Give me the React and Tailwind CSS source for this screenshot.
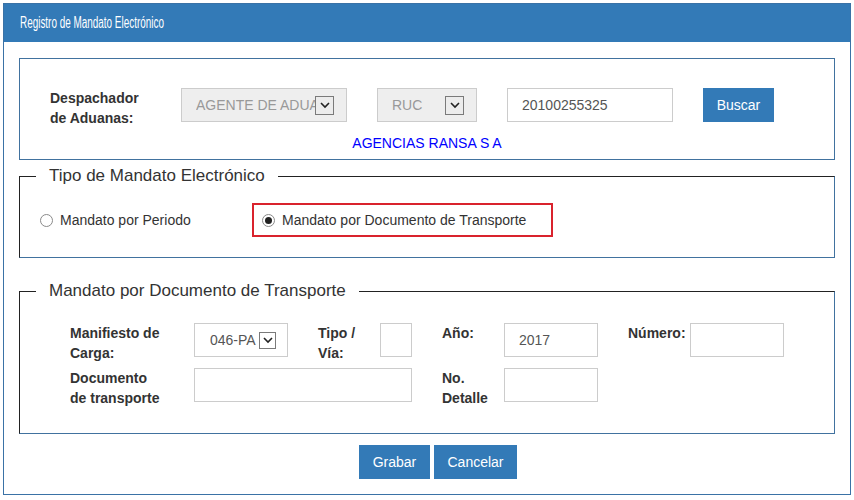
import React from "react";

function Arrow({ small }) {
  const size = small ? "h-[17px] w-[17px] bg-white" : "h-[19px] w-[19px] bg-[#ececec]";
  return (
    <span className={"flex shrink-0 items-center justify-center border border-[#7a7a7a] " + size}>
      <svg width="12" height="12" viewBox="0 0 12 12">
        <path d="M2 4l4 4 4-4" fill="none" stroke="#222" strokeWidth="1.6" />
      </svg>
    </span>
  );
}

function Radio({ checked }) {
  return (
    <span className="flex h-[13px] w-[13px] shrink-0 items-center justify-center rounded-full border border-[#8a8a8a] bg-white">
      {checked && <span className="h-[7px] w-[7px] rounded-full bg-[#222]" />}
    </span>
  );
}

function Label({ children, className = "" }) {
  return (
    <div className={"shrink-0 text-[14px] font-bold leading-[20px] text-[#333] " + className}>
      {children}
    </div>
  );
}

function Input({ value = "", className = "" }) {
  return (
    <div className={"flex h-[34px] shrink-0 items-center border border-[#ccc] bg-white pl-[14px] text-[14px] text-[#555] " + className}>
      {value}
    </div>
  );
}

export default function App() {
  return (
    <div className="min-h-[500px] bg-white px-[3px] pt-[3px] font-['Liberation_Sans',Arial,sans-serif] text-[14px] text-[#333]">
      <div className="border border-[#3a72a6]">
        {/* header */}
        <div className="flex h-[38px] items-center bg-[#337ab7] pl-[16px]">
          <span className="inline-block origin-left scale-x-[0.62] whitespace-nowrap text-[16px] text-white">
            Registro de Mandato Electrónico
          </span>
        </div>

        <div className="px-[15px] pb-[15px] pt-[16px]">
          {/* despachador */}
          <div className="border border-[#41729f] pb-[6px] pl-[30px] pt-[29px]">
            <div className="flex items-start">
              <Label className="w-[131px]">
                Despachador
                <br />
                de Aduanas:
              </Label>
              <div className="flex h-[34px] w-[166px] items-center border border-[#ccc] bg-[#eee] pl-[14px] pr-[12px]">
                <span className="flex-1 overflow-hidden whitespace-nowrap text-[#999]">AGENTE DE ADUANA</span>
                <Arrow />
              </div>
              <div className="ml-[30px] flex h-[34px] w-[100px] items-center border border-[#ccc] bg-[#eee] pl-[14px] pr-[12px]">
                <span className="flex-1 overflow-hidden whitespace-nowrap text-[#999]">RUC</span>
                <Arrow />
              </div>
              <Input value="20100255325" className="ml-[30px] w-[166px]" />
              <button className="ml-[30px] h-[34px] w-[71px] bg-[#337ab7] text-[14px] text-white">Buscar</button>
            </div>
            <div className="mt-[5px] pr-[30px] text-center leading-[20px] text-[#0000ff]">AGENCIAS RANSA S A</div>
          </div>

          {/* tipo de mandato */}
          <fieldset className="mt-[6px] border border-b-[#41729f] border-l-[#222] border-r-[#41729f] border-t-[#222]">
            <legend className="ml-[16px] px-[13px] text-[17px] leading-[20px] text-[#333]">Tipo de Mandato Electrónico</legend>
            <div className="flex items-center pb-[20px] pl-[20px] pt-[17px]">
              <label className="flex w-[212px] items-center gap-[7px]">
                <Radio />
                <span>Mandato por Periodo</span>
              </label>
              <label className="flex h-[34px] w-[301px] items-center gap-[7px] border-2 border-[#d9232d] pl-[8px]">
                <Radio checked />
                <span>Mandato por Documento de Transporte</span>
              </label>
            </div>
          </fieldset>

          {/* documento de transporte */}
          <fieldset className="mt-[23px] border border-b-[#41729f] border-l-[#222] border-r-[#41729f] border-t-[#222]">
            <legend className="ml-[16px] px-[13px] text-[17px] leading-[20px] text-[#333]">Mandato por Documento de Transporte</legend>
            <div className="pb-[25px] pl-[50px] pt-[22px]">
              <div className="flex items-start">
                <Label className="w-[124px]">
                  Manifiesto de
                  <br />
                  Carga:
                </Label>
                <div className="flex h-[34px] w-[94px] shrink-0 items-center border border-[#ccc] bg-white pl-[15px] pr-[11px]">
                  <span className="flex-1 overflow-hidden whitespace-nowrap text-[#555]">046-PA</span>
                  <Arrow small />
                </div>
                <Label className="ml-[30px] w-[62px]">
                  Tipo /
                  <br />
                  Vía:
                </Label>
                <Input className="w-[32px]" />
                <Label className="ml-[30px] w-[62px]">Año:</Label>
                <Input value="2017" className="w-[94px]" />
                <Label className="ml-[30px] w-[62px]">Número:</Label>
                <Input className="w-[94px]" />
              </div>
              <div className="mt-[5px] flex items-start">
                <Label className="w-[124px]">
                  Documento
                  <br />
                  de transporte
                </Label>
                <Input className="w-[218px]" />
                <Label className="ml-[30px] w-[62px]">
                  No.
                  <br />
                  Detalle
                </Label>
                <Input className="w-[94px]" />
              </div>
            </div>
          </fieldset>

          {/* botones */}
          <div className="mt-[11px] flex justify-center gap-[4px] pl-[22px]">
            <button className="h-[34px] w-[71px] bg-[#337ab7] text-[14px] text-white">Grabar</button>
            <button className="h-[34px] w-[83px] bg-[#337ab7] text-[14px] text-white">Cancelar</button>
          </div>
        </div>
      </div>
    </div>
  );
}
